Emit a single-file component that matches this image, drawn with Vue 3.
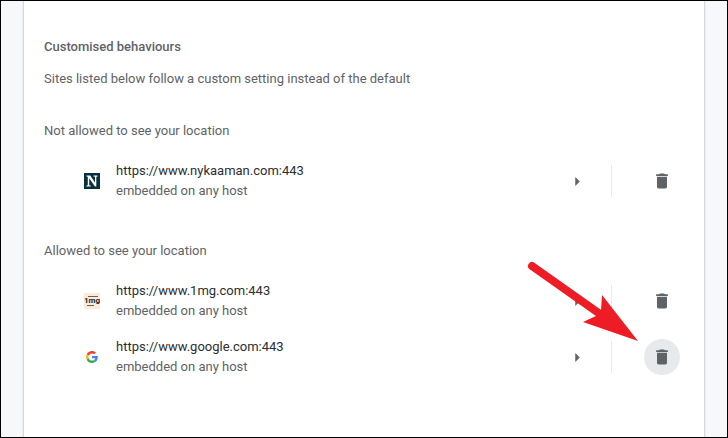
<template>
  <div class="page">
    <main class="card">
      <h2 class="title">Customised behaviours</h2>
      <p class="description">Sites listed below follow a custom setting instead of the default</p>

      <section v-for="group in groups" :key="group.heading" class="group">
        <h3 class="heading">{{ group.heading }}</h3>
        <ul class="site-list">
          <li v-for="site in group.sites" :key="site.url" class="site">
            <!-- favicons -->
            <svg v-if="site.icon === 'nykaa'" class="favicon" viewBox="0 0 16 16" aria-hidden="true">
              <rect width="16" height="16" fill="#06303f" />
              <path d="M2.500 2.500h3.700l4.800 7V3.700L9.500 3.500v-1h4v1l-1.200.2v9.800h-1.400L5.200 5.300v7l1.500.2v1H2.500v-1l1.300-.2V3.700l-1.300-.2z" fill="#fff" />
            </svg>
            <svg v-else-if="site.icon === 'onemg'" class="favicon" viewBox="0 0 16 16" aria-hidden="true">
              <rect width="16" height="16" fill="#fdebd9" />
              <path d="M4 3.500h10M3 12.500h7" stroke="#6b625b" stroke-width="1" />
              <text x="8" y="10" class="mg-text">1mg</text>
            </svg>
            <svg v-else class="favicon" viewBox="-8 -8 64 64" aria-hidden="true">
              <path fill="#EA4335" d="M24 9.500c3.540 0 6.710 1.220 9.210 3.600l6.850-6.850C35.900 2.380 30.470 0 24 0 14.620 0 6.510 5.380 2.560 13.220l7.980 6.190C12.430 13.720 17.740 9.500 24 9.500z" />
              <path fill="#4285F4" d="M46.980 24.550c0-1.570-.15-3.090-.38-4.550H24v9.020h12.940c-.58 2.960-2.260 5.480-4.780 7.180l7.730 6c4.510-4.180 7.090-10.360 7.090-17.650z" />
              <path fill="#FBBC05" d="M10.530 28.590c-.48-1.450-.76-2.990-.76-4.590s.27-3.140.76-4.590l-7.980-6.190C.92 16.460 0 20.120 0 24c0 3.880.92 7.540 2.560 10.780l7.970-6.190z" />
              <path fill="#34A853" d="M24 48c6.480 0 11.930-2.130 15.890-5.810l-7.730-6c-2.150 1.450-4.920 2.300-8.160 2.300-6.260 0-11.570-4.220-13.470-9.910l-7.980 6.190C6.510 42.620 14.620 48 24 48z" />
            </svg>

            <div class="site-text">
              <div class="url">{{ site.url }}</div>
              <div class="embedded">embedded on any host</div>
            </div>

            <button type="button" class="icon-btn" :aria-label="'Details for ' + site.url">
              <svg class="chevron" viewBox="0 0 4 8" aria-hidden="true">
                <path d="M0 0l4 4-4 4z" fill="#5f6368" />
              </svg>
            </button>
            <span class="separator"></span>
            <div class="remove">
              <button
                type="button"
                class="icon-btn"
                :class="{ active: site.active }"
                :aria-label="'Remove ' + site.url"
              >
                <svg class="trash" viewBox="0 0 24 24" aria-hidden="true">
                  <path d="M6 19c0 1.100.9 2 2 2h8c1.100 0 2-.9 2-2V7H6v12zM19 4h-3.500l-1-1h-5l-1 1H5v2h14V4z" fill="#5f6368" />
                </svg>
              </button>
              <!-- arrow pointing at the highlighted button -->
              <svg v-if="site.active" class="pointer" viewBox="0 0 114 82" aria-hidden="true">
                <path d="M6 6L74 54" stroke="#ee1c24" stroke-width="8" stroke-linecap="round" />
                <path d="M112 81L76 35 75 50 70 56 57 62z" fill="#ee1c24" />
              </svg>
            </div>
          </li>
        </ul>
      </section>
    </main>
  </div>
</template>

<script setup>
import { ref } from 'vue'

const groups = ref([
  {
    heading: 'Not allowed to see your location',
    sites: [
      { url: 'https://www.nykaaman.com:443', icon: 'nykaa', active: false },
    ],
  },
  {
    heading: 'Allowed to see your location',
    sites: [
      { url: 'https://www.1mg.com:443', icon: 'onemg', active: false },
      { url: 'https://www.google.com:443', icon: 'google', active: true },
    ],
  },
])
</script>

<style>
body {
  background: #f8f9fa;
}
</style>

<style scoped>
.page {
  box-sizing: border-box;
  min-height: 100vh;
  display: flex;
  padding: 0 23px;
  border: 1px solid #000;
  background: #f7f8fa;
  font-family: Roboto, "Liberation Sans", sans-serif;
  font-size: 13px;
  line-height: 20px;
  color: #5f6368;
}

.card {
  flex: 1;
  min-width: 0;
  padding: 36px 20px 52px;
  background: #fff;
  box-shadow: 0 0 0 1px #d5d7da, 0 0 0 2px #eceef0;
  clip-path: inset(0 -2px);
}

.title {
  margin: 0 0 12px;
  font-size: 13px;
  font-weight: 500;
}
.description { margin: 0; }

.group { margin-top: 32px; }
.heading {
  margin: 0 0 12px;
  font-size: 13px;
  font-weight: 400;
}

.site-list {
  list-style: none;
  margin: 0;
  padding: 0 4px 0 40px;
}
.site {
  display: flex;
  align-items: center;
  height: 56px;
}
.favicon {
  flex: none;
  width: 16px;
  height: 16px;
  margin-right: 16px;
}
.mg-text {
  font-size: 8px;
  font-weight: 700;
  text-anchor: middle;
  fill: #221f1f;
}
.site-text {
  flex: 1;
  min-width: 0;
}
.url { color: #2c2e32; }

.icon-btn {
  display: flex;
  align-items: center;
  justify-content: center;
  flex: none;
  width: 36px;
  height: 36px;
  padding: 0;
  border: none;
  border-radius: 50%;
  background: transparent;
  cursor: pointer;
}
.icon-btn:hover,
.icon-btn.active { background: #e8e9ea; }

.chevron {
  width: 5px;
  height: 9px;
}
.trash {
  width: 20px;
  height: 20px;
}
.separator {
  width: 1px;
  height: 32px;
  margin: 0 32px 0 16px;
  background: #e8eaed;
}

.remove { position: relative; }
.pointer {
  position: absolute;
  right: 40px;
  bottom: 33px;
  width: 114px;
  height: 82px;
  pointer-events: none;
}
</style>
